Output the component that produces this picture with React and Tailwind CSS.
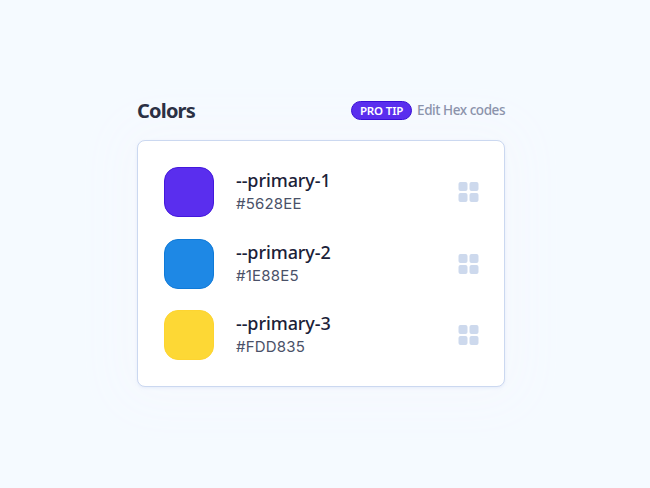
const COLORS = [
  { name: '--primary-1', hex: '#5628EE', classes: 'bg-[#5a2eee] border-[#4318dc]' },
  { name: '--primary-2', hex: '#1E88E5', classes: 'bg-[#1e88e5] border-[#0f7ad8]' },
  { name: '--primary-3', hex: '#FDD835', classes: 'bg-[#fdd835] border-[#fdd430]' },
]

function GridIcon() {
  return (
    <svg className="w-5 h-5 shrink-0 overflow-visible text-[#cdd9ed]" viewBox="0 0 20 20" fill="currentColor">
      <rect x="0.5" y="0" width="9" height="9" rx="2" />
      <rect x="11.5" y="0" width="9" height="9" rx="2" />
      <rect x="0.5" y="11" width="9" height="9" rx="2" />
      <rect x="11.5" y="11" width="9" height="9" rx="2" />
    </svg>
  )
}

function ColorRow({ color }) {
  return (
    <li className="flex items-center">
      <div className={`w-[50px] h-[50px] rounded-[14px] border shrink-0 ${color.classes}`} />
      <div className="ml-[22px] flex-1">
        <div className="text-[18px] leading-[24px] font-medium tracking-[-0.1px] text-[#1b2138]">{color.name}</div>
        <div className="font-['Inter',sans-serif] text-[15px] leading-[24px] tracking-[0.2px] text-[#4a5168]">{color.hex}</div>
      </div>
      <GridIcon />
    </li>
  )
}

export default function App() {
  return (
    <div className="h-screen overflow-hidden bg-[#f5faff] font-['Noto_Sans',sans-serif]">
      <div className="w-[368px] ml-[137px] pt-[96px]">
        {/* Header */}
        <div className="flex items-center justify-between h-[30px]">
          <h1 className="text-[20px] font-bold tracking-[-0.8px] text-[#2b3044]">Colors</h1>
          <div className="flex items-center gap-[5px] h-[19px] -mt-px">
            <span className="h-[19px] w-[61px] flex items-center justify-center rounded-full border border-[#3a0fd6] bg-[#5a2eee] text-[11.5px] font-semibold tracking-[-0.15px] text-white whitespace-nowrap">PRO TIP</span>
            <span className="text-[13.5px] leading-[17px] -mt-px font-medium tracking-[-0.45px] text-[#8b93ab] whitespace-nowrap">Edit Hex codes</span>
          </div>
        </div>

        {/* Palette */}
        <ul className="mt-[14px] h-[247px] rounded-[8px] border border-[#cbd8f0] bg-white pl-[26px] pr-[26px] pt-[26px] space-y-[21.5px] shadow-[0_1px_3px_rgba(180,195,235,0.25),0_0_50px_20px_rgba(246,249,254,1)]">
          {COLORS.map(color => (
            <ColorRow key={color.name} color={color} />
          ))}
        </ul>
      </div>
    </div>
  )
}
